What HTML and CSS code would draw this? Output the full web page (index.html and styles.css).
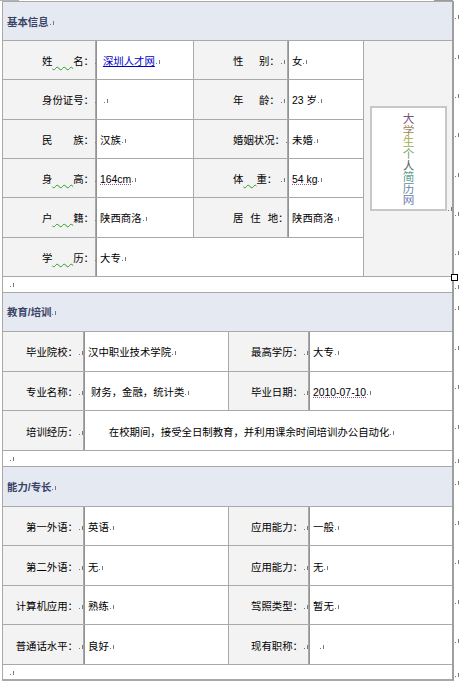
FILE: index.html
```html
<!DOCTYPE html>
<html lang="zh-CN">
<head>
<meta charset="utf-8">
<title>个人简历</title>
<link rel="stylesheet" href="styles.css">
</head>
<body>
<div class="page">
  <div class="topstrip"><span class="tab tab-l"></span><span class="tab tab-r"></span></div>
  <div class="sheet">
    <div class="doc">
      <div class="hd hd1"><span>基本信息</span><i class="pm"></i></div>
      <div class="g g1">
        <div class="photo">
          <div class="pwrap">
            <div class="pbox">
              <p class="vt"><span class="k1">大</span><span class="k2">学</span><span class="k3">生</span><span class="k4">个</span><span class="k5">人</span><span class="k6">简</span><span class="k7">历</span><span class="k8">网</span></p>
            </div>
            <i class="pm"></i>
          </div>
        </div>

        <div class="c lb l1"><span>姓<span class="sq">&emsp;&emsp;</span>名：</span><i class="pm"></i></div>
        <div class="c v"><span>&nbsp;<a class="lnk" href="#">深圳人才网</a></span><i class="pm"></i></div>
        <div class="c lb l3"><span>性&emsp;&ensp;别：</span><i class="pm"></i></div>
        <div class="c v"><span>女</span><i class="pm"></i></div>

        <div class="c lb l1"><span>身份证号：</span><i class="pm"></i></div>
        <div class="c v"><span>&nbsp;</span><i class="pm"></i></div>
        <div class="c lb l3"><span>年&emsp;&ensp;龄：</span><i class="pm"></i></div>
        <div class="c v"><span>23 岁</span><i class="pm"></i></div>

        <div class="c lb l1"><span>民&emsp;&emsp;族：</span><i class="pm"></i></div>
        <div class="c v"><span>汉族</span><i class="pm"></i></div>
        <div class="c lb l3"><span>婚姻状况：</span><i class="pm"></i></div>
        <div class="c v"><span>未婚</span><i class="pm"></i></div>

        <div class="c lb l1"><span>身<span class="sq">&emsp;&emsp;</span>高：</span><i class="pm"></i></div>
        <div class="c v"><span class="st">164cm</span><i class="pm"></i></div>
        <div class="c lb l3"><span>体<span class="sq">&emsp;&#8197;</span>重：</span><i class="pm"></i></div>
        <div class="c v"><span class="st">54 kg</span><i class="pm"></i></div>

        <div class="c lb l1"><span>户<span class="sq">&emsp;&emsp;</span>籍：</span><i class="pm"></i></div>
        <div class="c v"><span>陕西商洛</span><i class="pm"></i></div>
        <div class="c lb l3"><span>居&ensp;&#8198;住&ensp;&#8198;地：</span><i class="pm"></i></div>
        <div class="c v"><span>陕西商洛</span><i class="pm"></i></div>

        <div class="c lb l1"><span>学<span class="sq">&emsp;&emsp;</span>历：</span><i class="pm"></i></div>
        <div class="c v span3"><span>大专</span><i class="pm"></i></div>
      </div>
      <div class="blank bl1"><i class="pm"></i></div>

      <div class="hd hd2"><span>教育/培训</span><i class="pm"></i></div>
      <div class="g g2">
        <div class="c lb r"><span>毕业院校：</span><i class="pm"></i></div>
        <div class="c v"><span>汉中职业技术学院</span><i class="pm"></i></div>
        <div class="c lb r"><span>最高学历：</span><i class="pm"></i></div>
        <div class="c v"><span>大专</span><i class="pm"></i></div>

        <div class="c lb r"><span>专业名称：</span><i class="pm"></i></div>
        <div class="c v"><span>&nbsp;财务，金融，统计类</span><i class="pm"></i></div>
        <div class="c lb r"><span>毕业日期：</span><i class="pm"></i></div>
        <div class="c v"><span class="st">2010-07-10</span><i class="pm"></i></div>

        <div class="c lb r"><span>培训经历：</span><i class="pm"></i></div>
        <div class="c v span3"><span class="indent">在校期间，接受全日制教育，并利用课余时间培训办公自动化</span><i class="pm"></i></div>
      </div>
      <div class="blank bl2"><i class="pm"></i></div>

      <div class="hd hd3"><span>能力/专长</span><i class="pm"></i></div>
      <div class="g g3">
        <div class="c lb r"><span>第一外语：</span><i class="pm"></i></div>
        <div class="c v"><span>英语</span><i class="pm"></i></div>
        <div class="c lb r"><span>应用能力：</span><i class="pm"></i></div>
        <div class="c v"><span>一般</span><i class="pm"></i></div>

        <div class="c lb r"><span>第二外语：</span><i class="pm"></i></div>
        <div class="c v"><span>无</span><i class="pm"></i></div>
        <div class="c lb r"><span>应用能力：</span><i class="pm"></i></div>
        <div class="c v"><span>无</span><i class="pm"></i></div>

        <div class="c lb r"><span>计算机应用：</span><i class="pm"></i></div>
        <div class="c v"><span>熟练</span><i class="pm"></i></div>
        <div class="c lb r"><span>驾照类型：</span><i class="pm"></i></div>
        <div class="c v"><span>暂无</span><i class="pm"></i></div>

        <div class="c lb r"><span>普通话水平：</span><i class="pm"></i></div>
        <div class="c v"><span>良好</span><i class="pm"></i></div>
        <div class="c lb r"><span>现有职称：</span><i class="pm"></i></div>
        <div class="c v"><span>&nbsp;&nbsp;</span><i class="pm"></i></div>
      </div>
      <div class="blank bl3"><i class="pm"></i></div>
    </div>

    <div class="rmarks">
      <div class="rm rh1"><i class="pm"></i></div>
      <div class="rm r1"><i class="pm"></i></div>
      <div class="rm r1"><i class="pm"></i></div>
      <div class="rm r1"><i class="pm"></i></div>
      <div class="rm r1"><i class="pm"></i></div>
      <div class="rm r1"><i class="pm"></i></div>
      <div class="rm r1"><i class="pm"></i></div>
      <div class="rm rb rb1"><i class="pm"></i></div>
      <div class="rm rh2"><i class="pm"></i></div>
      <div class="rm r2"><i class="pm"></i></div>
      <div class="rm r2"><i class="pm"></i></div>
      <div class="rm r2"><i class="pm"></i></div>
      <div class="rm rb rb2"><i class="pm"></i></div>
      <div class="rm rh3"><i class="pm"></i></div>
      <div class="rm r3"><i class="pm"></i></div>
      <div class="rm r3"><i class="pm"></i></div>
      <div class="rm r3"><i class="pm"></i></div>
      <div class="rm r3"><i class="pm"></i></div>
      <div class="rm rb rb3"><i class="pm"></i></div>
    </div>
  </div>
  <div class="handle"></div>
</div>
</body>
</html>
```

FILE: styles.css
```css
* {
  box-sizing: border-box;
  margin: 0;
  padding: 0;
}

html, body {
  background: #ffffff;
}

body {
  margin: 0;
  width: 460px;
  height: 687px;
  overflow: hidden;
  font-family: "Liberation Sans", "Noto Sans CJK SC", sans-serif;
  font-size: 10.4px;
  color: #000;
}

.page {
  position: relative;
  width: 460px;
}

.topstrip {
  height: 1px;
  width: 453px;
  display: flex;
  justify-content: space-between;
}

.tab-l {
  width: 19px;
  background: #b4b4b4;
}

.tab-r {
  width: 19px;
  background: #9c9c9c;
}

.sheet {
  display: flex;
  padding-left: 2px;
}

/* document tables */
.doc {
  width: 452px;
  flex: none;
  border: 1px solid #a9a9a9;
  border-right: 2px solid #9f9f9f;
  background: #a9a9a9;
  display: flex;
  flex-direction: column;
  gap: 1px;
}

.hd {
  background: #e4e9f2;
  color: #3b4466;
  font-weight: bold;
  display: flex;
  align-items: center;
  padding: 3px 0 0 4px;
  line-height: 12px;
}

.hd1 { height: 38px; }
.hd2 { height: 38.3px; }
.hd3 { height: 39px; }

.g {
  display: grid;
  gap: 1px;
}

.g1 {
  grid-template-columns: 92px 97px 93px 75px 88px;
  grid-auto-rows: 38.33px;
}

.g2,
.g3 {
  grid-template-columns: 80px 144px 79px 143px;
}

.g2 { grid-auto-rows: 38.67px; }
.g3 { grid-auto-rows: 38.5px; }

.c {
  display: flex;
  align-items: center;
  line-height: 12px;
  white-space: nowrap;
  padding-top: 4px;
}

.lb {
  background: #f3f3f3;
}

.lb.l1 {
  justify-content: space-between;
  padding-left: 39px;
  padding-right: 0;
}

.lb.l3 {
  justify-content: space-between;
  padding-left: 39px;
  padding-right: 2px;
}

.lb.r {
  justify-content: flex-end;
  padding-right: 0;
}

.v {
  background: #ffffff;
  border-left: 1px solid #929292;
  padding-left: 3px;
}

.span3 {
  grid-column: 2 / span 3;
}

.indent {
  padding-left: 2em;
}

.sq {
  text-decoration: underline wavy #2c9a2c;
  text-decoration-thickness: 1px;
  text-underline-offset: 1px;
}

.st {
  text-decoration: underline dotted #9a50a0;
  text-underline-offset: 1px;
}

.lnk {
  color: #0000cc;
  text-decoration: underline;
}

.blank {
  background: #ffffff;
  display: flex;
  align-items: center;
  padding: 2px 0 0 6px;
}

.bl1 { height: 14.7px; }
.bl2 { height: 15px; }
.bl3 { height: 14px; }

/* photo column */
.photo {
  grid-column: 5;
  grid-row: 1 / span 6;
  background: #f3f3f3;
  display: flex;
  align-items: center;
  padding-left: 6px;
}

.pwrap {
  display: flex;
  align-items: flex-end;
}

.pbox {
  width: 77px;
  height: 105px;
  border: 2px solid #c7c7c7;
  background: #ffffff;
  display: flex;
  align-items: center;
  justify-content: center;
}

.vt {
  writing-mode: vertical-rl;
  font-family: "Noto Sans CJK SC", sans-serif;
  font-size: 11.6px;
  line-height: 12px;
  padding-top: 2px;
}

.k1 { color: #7a567e; }
.k2 { color: #a0865a; }
.k3 { color: #a4ae48; }
.k4 { color: #78986a; }
.k5 { color: #56665a; }
.k6 { color: #56a08c; }
.k7 { color: #6888a2; }
.k8 { color: #6e7eb2; }

/* paragraph marks */
.pm {
  display: inline-block;
  flex: none;
  width: 4px;
  height: 4px;
  margin-left: 1px;
  background:
    linear-gradient(#7a7a7a, #7a7a7a) left bottom / 1px 1px no-repeat,
    linear-gradient(#7a7a7a, #7a7a7a) right top / 1px 4px no-repeat;
}

/* end-of-row marks on the right */
.rmarks {
  display: flex;
  flex-direction: column;
  padding-top: 1px;
  width: 6px;
}

.rm {
  display: flex;
  align-items: center;
}

.rm .pm {
  margin-left: 1px;
  margin-bottom: 10px;
}

.rm.rb .pm {
  margin-bottom: 0;
  margin-top: 3px;
}

.rh1 { height: 40px; }
.r1 { height: 39.33px; }
.rb1 { height: 15.67px; }
.rh2 { height: 39.33px; }
.r2 { height: 39.67px; }
.rb2 { height: 16px; }
.rh3 { height: 40px; }
.r3 { height: 39.5px; }
.rb3 { height: 15px; }

/* table resize handle, over the border */
.handle {
  position: absolute;
  left: 451px;
  top: 274px;
  width: 7px;
  height: 7px;
  border: 1px solid #000;
  background: #fff;
}
```
